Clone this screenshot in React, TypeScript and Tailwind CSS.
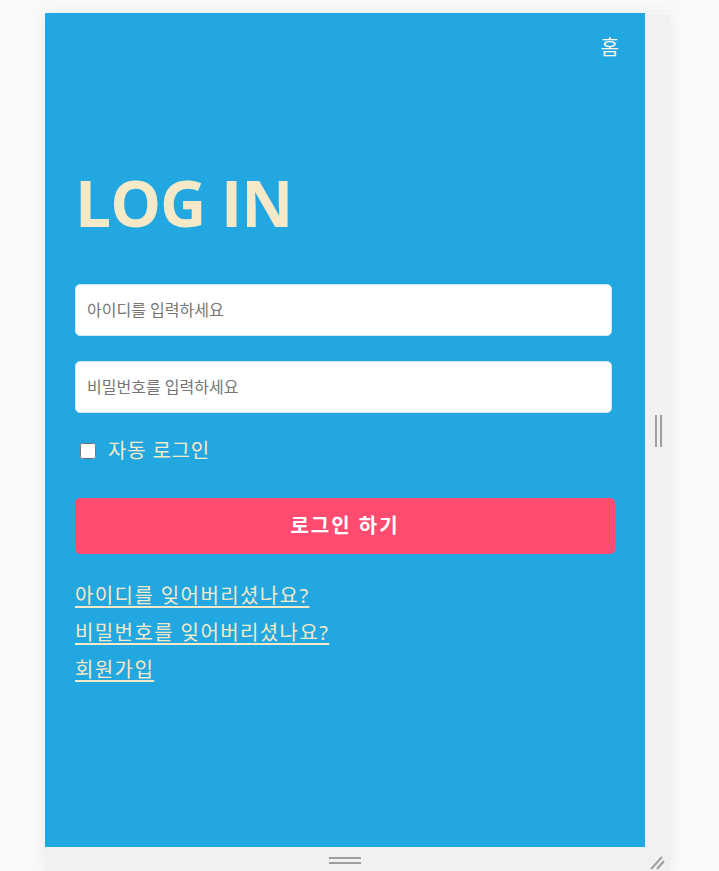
import { useState } from 'react';

const font = { fontFamily: '"Noto Sans", "Noto Sans CJK KR", sans-serif' };

export default function App() {
  const [autoLogin, setAutoLogin] = useState(false);

  return (
    <div className="min-h-[871px] bg-[#f9f9f9] pl-[45px] pt-[13px]" style={font}>
      {/* preview frame */}
      <div className="w-[625px] shadow-[0_0_12px_rgba(0,0,0,0.06)]">
        <div className="flex">
          <main className="w-[601px] h-[835px] bg-[#23a7e0] border-r border-b border-[#e8f4fa] px-[30px] flex flex-col">
            <nav className="flex justify-end pt-[21px]">
              <a href="#" className="text-[20px] leading-[28px] text-[#fdf6e6] mr-[-4px]">홈</a>
            </nav>

            <h1 className="mt-[109px] text-[64px] leading-[64px] font-bold text-[#f5e9c8] tracking-[-1px]" style={{ fontFamily: '"Open Sans", "Noto Sans", sans-serif' }}>
              LOG IN
            </h1>

            <form className="mt-[49px] flex flex-col" onSubmit={(e) => e.preventDefault()}>
              <input
                type="text"
                placeholder="아이디를 입력하세요"
                className="w-[537px] h-[52px] rounded-[5px] bg-white border border-[#cfe8f5] px-[11px] text-[16px] text-gray-800 placeholder:text-[#757575] outline-none"
              />
              <input
                type="password"
                placeholder="비밀번호를 입력하세요"
                className="mt-[25px] w-[537px] h-[52px] rounded-[5px] bg-white border border-[#cfe8f5] px-[11px] text-[16px] text-gray-800 placeholder:text-[#757575] outline-none"
              />

              <label className="mt-[25px] ml-[5px] flex items-center gap-[12px] text-[20px] leading-[25px] tracking-[0.8px] text-[#f5e9c8]">
                <input
                  type="checkbox"
                  checked={autoLogin}
                  onChange={() => setAutoLogin(!autoLogin)}
                  className="w-[16px] h-[16px]"
                />
                자동 로그인
              </label>

              <button
                type="submit"
                className="mt-[35px] w-[540px] h-[56px] rounded-[5px] bg-[#ff4b6f] text-white text-[20px] font-bold tracking-[2px]"
              >
                로그인 하기
              </button>
            </form>

            <div className="mt-[28px] flex flex-col items-start gap-[9px] text-[20px] leading-[28px] tracking-[1.4px] text-[#f5e9c8]">
              <a href="#" className="underline underline-offset-[3px]">아이디를 잊어버리셨나요?</a>
              <a href="#" className="underline underline-offset-[3px]">비밀번호를 잊어버리셨나요?</a>
              <a href="#" className="underline underline-offset-[3px]">회원가입</a>
            </div>
          </main>

          {/* right resize handle */}
          <div className="w-[24px] h-[834px] mt-[1px] bg-[#f1f1f1] flex items-center justify-center">
            <div className="flex gap-[3px]">
              <div className="w-[2px] h-[32px] bg-[#9e9e9e]" />
              <div className="w-[2px] h-[32px] bg-[#9e9e9e]" />
            </div>
          </div>
        </div>

        {/* bottom resize handle */}
        <div className="relative w-[625px] h-[24px] bg-[#f1f1f1] flex">
          <div className="w-[600px] flex flex-col items-center justify-center gap-[3px]">
            <div className="w-[32px] h-[2px] bg-[#9e9e9e]" />
            <div className="w-[32px] h-[2px] bg-[#9e9e9e]" />
          </div>
          <svg className="absolute right-[5px] top-[6px]" width="16" height="16" viewBox="0 0 16 16">
            <line x1="2" y1="15" x2="13" y2="3" stroke="#9e9e9e" strokeWidth="2" />
            <line x1="8" y1="15" x2="15" y2="7" stroke="#9e9e9e" strokeWidth="2" />
          </svg>
        </div>
      </div>
    </div>
  );
}
